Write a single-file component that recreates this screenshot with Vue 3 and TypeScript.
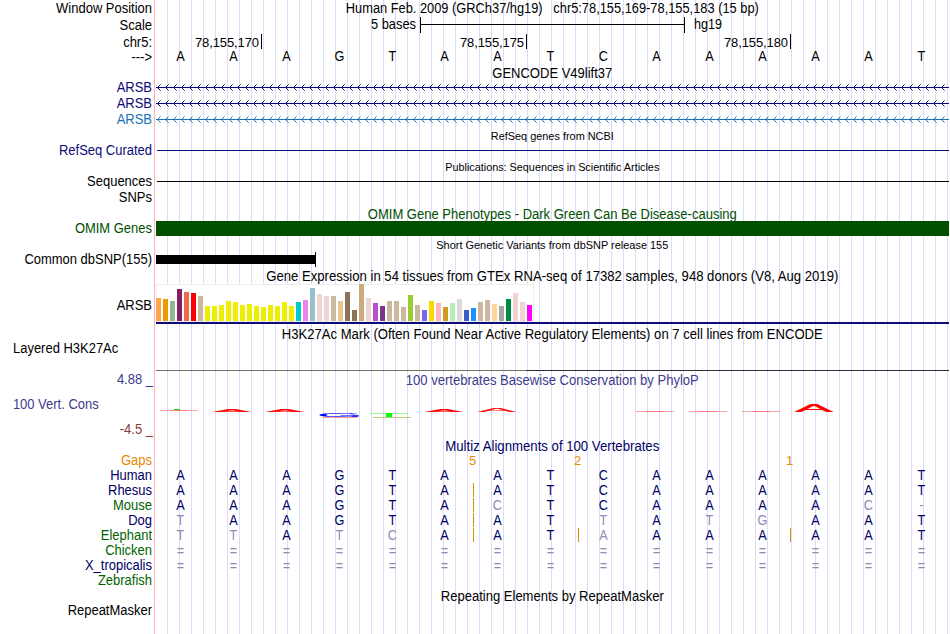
<template>
  <div class="browser">
    <div v-for="(row, i) in rows" :key="i" class="row" :style="{ height: row.h + 'px' }">
      <div class="label" :class="[row.color, { left: row.left }]" :style="{ paddingTop: (row.pad || 0) + 'px' }">
        <template v-if="row.kind == 'cons'">
          <div class="limit">4.88 _</div>
          <div class="consName">100 Vert. Cons</div>
          <div class="limit low">-4.5 _</div>
        </template>
        <template v-else>{{ row.label }}</template>
      </div>
      <div class="track">
        <svg v-if="row.title || row.kind" width="794" :height="row.h" class="plot">
          <text v-if="row.title" x="396.3" :y="row.kind == 'cons' ? 13 : 12" :textLength="row.tw" text-anchor="middle"
            lengthAdjust="spacingAndGlyphs" :class="[row.titleColor, { small: row.small }]">{{ row.title }}</text>

          <g v-if="row.kind == 'scale'">
            <text x="215" y="12" textLength="45" lengthAdjust="spacingAndGlyphs">5 bases</text>
            <path class="ink" d="M264.5 0v16M264.5 7.5h264M528.5 0v16" />
            <text x="538" y="12" textLength="28" lengthAdjust="spacingAndGlyphs">hg19</text>
          </g>

          <g v-if="row.kind == 'position'">
            <g v-for="p in positions" :key="p.x">
              <text class="coord" :x="p.x - 66" y="13" textLength="64">{{ p.text }}</text>
              <path class="ink" :d="`M${p.x + 0.5} 0v15`" />
            </g>
          </g>

          <g v-if="row.kind == 'gene'" :class="row.color">
            <path class="line" d="M0 7.5h793" />
            <path v-for="n in 99" :key="n" class="line" :d="`M${n * 8 - 3.5} 4.5l-3 3l3 3`" />
          </g>

          <path v-if="row.kind == 'line'" class="line" :class="row.color" d="M1 7.5h792" />
          <rect v-if="row.kind == 'omim'" class="omimBar" width="793" height="15" />

          <g v-if="row.kind == 'snp'">
            <rect y="3" width="159" height="9" />
            <rect x="159" width="1" height="15" />
          </g>

          <g v-if="row.kind == 'gtex'">
            <rect x="0.5" y="0.5" width="377" height="37" class="gtexBox" />
            <rect v-for="(b, k) in tissues" :key="k" :x="k * 7" :y="37 - b[0]" width="5" :height="b[0]" :fill="b[1]" />
            <rect y="38" width="793" height="2" class="gtexLine" />
          </g>

          <g v-if="row.kind == 'acetyl'">
            <rect y="29" width="370" height="1" fill="#73735f" />
            <rect x="370" y="29" width="423" height="1" fill="#352b35" />
          </g>

          <g v-if="row.kind == 'cons'">
            <text v-for="(l, k) in logos" :key="k" class="logo" :style="{ fill: l.fill, stroke: l.fill }"
              :transform="`translate(${l.x} ${l.y}) scale(${l.w / 67} ${l.h / 69})`">{{ l.base }}</text>
            <!-- scores close to zero are only a hairline -->
            <rect v-for="f in flat" :key="f.x" :x="f.x" :y="f.y" width="38" height="1" fill="#f00" opacity="0.35" />
            <rect v-for="f in flat" :key="f.x" :x="f.x + 10" :y="f.y" width="18" height="1" fill="#f00" opacity="0.25" />
            <rect x="18" y="37" width="6" height="1" fill="#00e600" />
            <rect x="167" y="45" width="34" height="1" fill="#ff9c9c" />
            <rect x="230" y="41" width="6" height="4" fill="#0f0" />
            <rect x="214" y="41" width="38" height="1" fill="#0f0" opacity="0.4" />
            <rect x="217" y="45" width="38" height="1" fill="#c4c47c" />
          </g>

          <g v-if="row.kind == 'gaps'" class="orange">
            <text class="coord" x="313" y="12">5</text>
            <text class="coord" x="418" y="12">2</text>
            <text class="coord" x="630" y="12">1</text>
          </g>
          <rect v-for="g in row.gaps" :key="g" :x="g" width="1" height="14" fill="#e68a00" />
        </svg>
        <div v-if="row.seq" class="bases" :class="{ aligned: row.align }">
          <span v-for="(c, k) in row.seq.split('')" :key="k"
            :class="{ diff: row.align && c != human[k], same: c == '=' }">{{ c }}</span>
        </div>
      </div>
    </div>
  </div>
</template>

<script setup lang="ts">
interface Row {
  h: number
  label?: string
  color?: string
  left?: boolean
  pad?: number
  title?: string
  tw?: number
  titleColor?: string
  small?: boolean
  kind?: string
  seq?: string
  align?: boolean
  gaps?: number[]
}

const human = 'AAAGTAATCAAAAAT'

const rows: Row[] = [
  { h: 16, label: 'Window Position', title: 'Human Feb. 2009 (GRCh37/hg19)\u00a0\u00a0 chr5:78,155,169-78,155,183 (15 bp)', tw: 413 },
  { h: 17, label: 'Scale', pad: 1, kind: 'scale' },
  { h: 15, label: 'chr5:', pad: 1, kind: 'position' },
  { h: 17, label: '--->', pad: 1, seq: human },
  { h: 14, title: 'GENCODE V49lift37', tw: 120 },
  { h: 16, label: 'ARSB', color: 'navy', kind: 'gene' },
  { h: 16, label: 'ARSB', color: 'navy', kind: 'gene' },
  { h: 16, label: 'ARSB', color: 'blue', kind: 'gene' },
  { h: 15, title: 'RefSeq genes from NCBI', tw: 123, small: true },
  { h: 16, label: 'RefSeq Curated', color: 'navy', kind: 'line' },
  { h: 15, title: 'Publications: Sequences in Scientific Articles', tw: 214, small: true },
  { h: 16, label: 'Sequences', kind: 'line' },
  { h: 17, label: 'SNPs' },
  { h: 14, title: 'OMIM Gene Phenotypes - Dark Green Can Be Disease-causing', tw: 369, titleColor: 'green' },
  { h: 16, label: 'OMIM Genes', color: 'green', kind: 'omim' },
  { h: 15, title: 'Short Genetic Variants from dbSNP release 155', tw: 232, small: true },
  { h: 17, label: 'Common dbSNP(155)', kind: 'snp' },
  { h: 15, title: 'Gene Expression in 54 tissues from GTEx RNA-seq of 17382 samples, 948 donors (V8, Aug 2019)', tw: 572 },
  { h: 43, label: 'ARSB', pad: 14, kind: 'gtex' },
  { h: 14, title: 'H3K27Ac Mark (Often Found Near Active Regulatory Elements) on 7 cell lines from ENCODE', tw: 541 },
  { h: 31, label: 'Layered H3K27Ac', left: true, kind: 'acetyl' },
  { h: 67, kind: 'cons', title: '100 vertebrates Basewise Conservation by PhyloP', tw: 293, titleColor: 'violet' },
  { h: 14, title: 'Multiz Alignments of 100 Vertebrates', tw: 214, titleColor: 'deep' },
  { h: 15, label: 'Gaps', color: 'orange', kind: 'gaps' },
  { h: 15, label: 'Human', color: 'deep', seq: human, align: true },
  { h: 15, label: 'Rhesus', color: 'deep', seq: human, align: true, kind: 'align', gaps: [317] },
  { h: 15, label: 'Mouse', color: 'leaf', seq: 'AAAGTACTCAAAAC-', align: true, kind: 'align', gaps: [317] },
  { h: 15, label: 'Dog', color: 'deep', seq: 'TAAGTAATTATGAAT', align: true, kind: 'align', gaps: [317] },
  { h: 15, label: 'Elephant', color: 'leaf', seq: 'TTATCAATAAAAAAT', align: true, kind: 'align', gaps: [317, 422, 634] },
  { h: 15, label: 'Chicken', color: 'leaf', seq: '===============', align: true },
  { h: 15, label: 'X_tropicalis', color: 'deep', seq: '===============', align: true },
  { h: 16, label: 'Zebrafish', color: 'leaf' },
  { h: 14, title: 'Repeating Elements by RepeatMasker', tw: 223 },
  { h: 30, label: 'RepeatMasker' },
]

const positions = [
  { x: 105, text: '78,155,170' },
  { x: 370, text: '78,155,175' },
  { x: 634, text: '78,155,180' },
]

// bar height and tissue color
const tissues: [number, string][] = [
  [23, '#ffa54f'], [22, '#ee9a00'], [20, '#8fbc8f'], [32, '#8b1c62'], [29, '#ee6a50'], [28, '#ff0000'],
  [25, '#cdb79e'], [15, '#eeee00'], [15, '#eeee00'], [16, '#eeee00'], [20, '#eeee00'], [19, '#eeee00'],
  [16, '#eeee00'], [17, '#eeee00'], [15, '#eeee00'], [14, '#eeee00'], [16, '#eeee00'], [15, '#eeee00'],
  [19, '#eeee00'], [15, '#eeee00'], [19, '#00cdcd'], [21, '#ee82ee'], [33, '#9ac0cd'], [27, '#eed5d2'],
  [25, '#eed5d2'], [25, '#cdb79e'], [20, '#eec591'], [29, '#8b7355'], [11, '#8b7355'], [37, '#cdaa7d'],
  [23, '#eed5d2'], [18, '#b452cd'], [15, '#7a378b'], [20, '#cdb79e'], [20, '#cdb79e'], [14, '#cdb79e'],
  [26, '#9acd32'], [16, '#cdb79e'], [11, '#7a67ee'], [20, '#ffd700'], [18, '#ffb6c1'], [14, '#cd9b1d'],
  [18, '#b4eeb4'], [22, '#d9d9d9'], [11, '#3a5fcd'], [13, '#1e90ff'], [19, '#cdb79e'], [21, '#cdb79e'],
  [17, '#ffd39b'], [15, '#a6a6a6'], [22, '#008b45'], [28, '#eed5d2'], [19, '#eed5d2'], [16, '#ff00ff'],
]

// letters squeezed to the height of the score
const logos = [
  { base: 'A', x: 57, y: 40, w: 38, h: 2.8, fill: '#f00' },
  { base: 'A', x: 110, y: 40, w: 38, h: 2.8, fill: '#f00' },
  { base: 'G', x: 161, y: 44.8, w: 39, h: 3.6, fill: '#00f' },
  { base: 'A', x: 269, y: 40, w: 38, h: 2.8, fill: '#f00' },
  { base: 'A', x: 322, y: 40, w: 38, h: 3.8, fill: '#f00' },
  { base: 'A', x: 639, y: 40, w: 38, h: 7.8, fill: '#f00' },
]
const flat = [
  { x: 4, y: 38 },
  { x: 480, y: 39 },
  { x: 533, y: 39 },
  { x: 586, y: 39 },
]
</script>

<style>
body {
  background: #fff;
  overflow: hidden;
}
</style>

<style scoped>
.browser {
  box-sizing: border-box;
  width: 950px;
  height: 634px;
  padding-top: 1px;
  overflow: hidden;
  font: 13.8px/15px "Liberation Sans", Arial, sans-serif;
  color: #000;
  background:
    linear-gradient(#ffb4b4, #ffb4b4) 154px 0 / 1px 100% no-repeat,
    repeating-linear-gradient(90deg, #dcdcfa 0, #dcdcfa 1px, transparent 1px, transparent 12px) 167px 0 / 782px 100% no-repeat;
}
.row {
  display: grid;
  grid-template-columns: 152px 794px;
  column-gap: 4px;
}
.label {
  text-align: right;
  white-space: nowrap;
  transform: scaleX(0.94);
  transform-origin: 100% 0;
}
.label.left {
  text-align: left;
  padding-left: 13px;
  transform-origin: 13px 0;
}
.track {
  display: grid;
}
.plot,
.bases {
  grid-area: 1 / 1;
}
.plot {
  display: block;
  overflow: visible;
}
.plot text {
  fill: currentColor;
}
.plot text.small {
  font-size: 11px;
}
.plot text.coord {
  font-size: 13px;
}
.plot text.logo {
  font-size: 100px;
  stroke-width: 2px;
}
.ink,
.line {
  stroke: currentColor;
  fill: none;
}
.bases {
  display: grid;
  grid-template-columns: repeat(15, 52.93px);
  margin-left: -2.2px;
  text-align: center;
}
.bases span {
  transform: scaleX(0.92);
}
.aligned {
  color: #000064;
}
.diff {
  color: #8c8cb4;
}
.bases .same {
  padding-top: 1px;
}
.limit {
  color: #3c3c8c;
  margin-right: -1px;
}
.consName {
  color: #3c3c8c;
  text-align: left;
  /* the label is narrowed towards its right edge */
  padding: 10px 0 10px 4px;
}
.low {
  color: #8c3c3c;
}
.navy {
  color: #0c0c78;
}
.blue {
  color: #1874b4;
}
.green {
  color: #005000;
}
.leaf {
  color: #006400;
}
.deep {
  color: #000064;
}
.violet {
  color: #3c3c8c;
}
.orange {
  color: #e68a00;
}
.omimBar {
  fill: #005000;
}
.gtexBox {
  fill: #fff;
  stroke: #eee;
}
.gtexLine {
  fill: #0c0c78;
}
</style>
